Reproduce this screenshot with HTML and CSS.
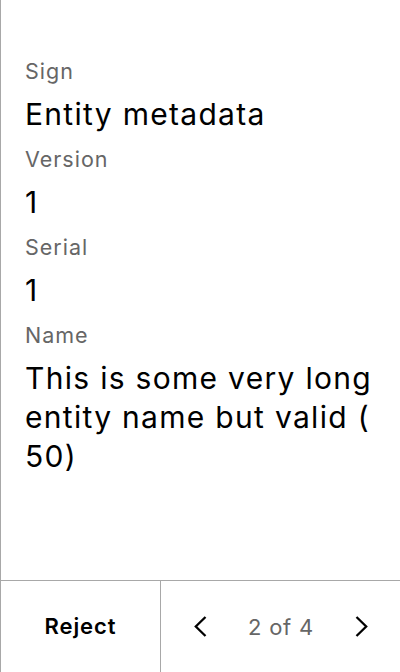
FILE: index.html
```html
<!DOCTYPE html>
<html>
<head>
<meta charset="utf-8">
<link rel="stylesheet" href="styles.css">
</head>
<body>
<div class="screen">
  <main class="content">
    <div class="field">
      <div class="label">Sign</div>
      <div class="value">Entity metadata</div>
    </div>
    <div class="field">
      <div class="label">Version</div>
      <div class="value">1</div>
    </div>
    <div class="field">
      <div class="label">Serial</div>
      <div class="value">1</div>
    </div>
    <div class="field">
      <div class="label">Name</div>
      <div class="value">This is some very long entity name but valid ( 50)</div>
    </div>
  </main>
  <footer class="footer">
    <div class="reject">Reject</div>
    <div class="pager">
      <svg class="chev" width="14" height="21" viewBox="0 0 14 21"><path d="M12.5 1 L2.8 10.5 L12.5 20" fill="none" stroke="#000" stroke-width="2.3"/></svg>
      <span class="count">2 of 4</span>
      <svg class="chev" width="14" height="21" viewBox="0 0 14 21"><path d="M1.5 1 L11.2 10.5 L1.5 20" fill="none" stroke="#000" stroke-width="2.3"/></svg>
    </div>
  </footer>
</div>
</body>
</html>
```
FILE: styles.css
```css
html, body {
  margin: 0;
  padding: 0;
  background: #fff;
}
body {
  font-family: Inter, "Noto Sans", sans-serif;
  color: #000;
}
.screen {
  width: 399px;
  height: 672px;
  border-left: 1px solid #a8a8a8;
  display: flex;
  flex-direction: column;
}
.content {
  flex: 1;
  padding: 56px 24px 0 24px;
  display: flex;
  flex-direction: column;
  gap: 10.5px;
}
.field {
  display: flex;
  flex-direction: column;
  gap: 8.5px;
}
.label {
  font-size: 21.5px;
  line-height: 30px;
  letter-spacing: 1px;
  color: #666;
}
.value {
  font-size: 30px;
  line-height: 39px;
  letter-spacing: 1.3px;
  color: #000;
}
.footer {
  height: 91px;
  border-top: 1px solid #a8a8a8;
  display: flex;
}
.reject {
  width: 159px;
  border-right: 1px solid #a8a8a8;
  display: flex;
  align-items: center;
  justify-content: center;
  padding-bottom: 2px;
  font-size: 22px;
  font-weight: 600;
  letter-spacing: 0.9px;
}
.pager {
  flex: 1;
  display: flex;
  align-items: center;
  justify-content: space-between;
  padding: 0 31px 0 32px;
}
.count {
  font-size: 22px;
  letter-spacing: 0.8px;
  color: #666;
}
```
